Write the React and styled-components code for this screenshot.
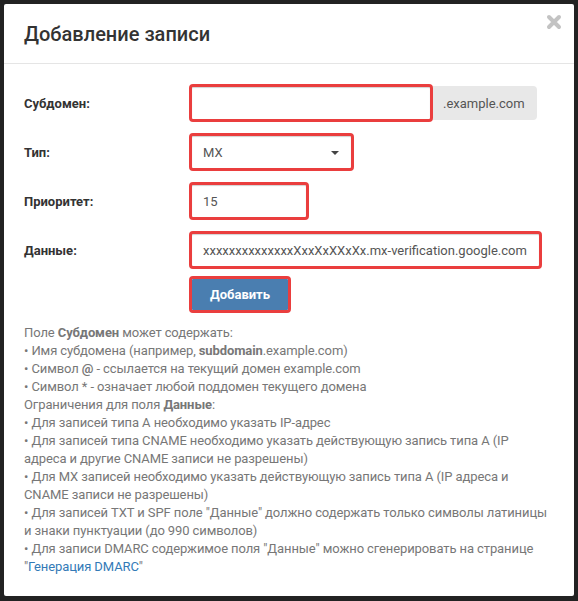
import React from 'react';
import styled, { createGlobalStyle } from 'styled-components';

const GlobalStyle = createGlobalStyle`
  html, body {
    margin: 0;
    padding: 0;
    background: #222222;
  }
  body {
    font-family: Roboto, "Liberation Sans", Arial, sans-serif;
  }
  * {
    box-sizing: border-box;
  }
`;

const Modal = styled.div`
  margin: 4px;
  width: 570px;
  height: 592px;
  background: #fff;
  border-radius: 2px;
  overflow: hidden;
`;

const Header = styled.div`
  position: relative;
  height: 60px;
  padding: 18px 20px 0;
  border-bottom: 1px solid #e5e5e5;
`;

const Title = styled.h4`
  margin: 0;
  font-size: 20px;
  font-weight: 500;
  color: #333;
  line-height: 24px;
`;

const CloseButton = styled.button`
  position: absolute;
  top: 10px;
  right: 12px;
  padding: 0;
  border: 0;
  background: none;
  cursor: pointer;
  display: flex;
`;

const Body = styled.div`
  padding: 20px 20px 0;
`;

const FormRow = styled.div`
  display: flex;
  align-items: center;
  margin-bottom: 11px;
`;

const Label = styled.label`
  width: 165px;
  flex: none;
  font-size: 13px;
  font-weight: 700;
  color: #333;
`;

const InputGroup = styled.div`
  display: flex;
  align-items: center;
`;

const Field = styled.div`
  position: relative;
  width: ${(p) => p.$width}px;
  height: 38px;
  border: 3px solid #ea3e3e;
  border-radius: 4px;
  box-shadow: inset 0 1px 1px rgba(0, 0, 0, 0.18);
  background: #fff;
  padding: 0 12px 0 11px;
  display: flex;
  align-items: center;
  overflow: hidden;
  font-size: 13px;
  color: #555;
  white-space: nowrap;
`;

const Addon = styled.div`
  height: 34px;
  padding: 0 12px 0 10px;
  display: flex;
  align-items: center;
  background: #e8e8e8;
  border-radius: 0 4px 4px 0;
  font-size: 13px;
  color: #555;
`;

const Caret = styled.span`
  position: absolute;
  right: 12px;
  top: 15px;
  width: 0;
  height: 0;
  border-left: 4px solid transparent;
  border-right: 4px solid transparent;
  border-top: 4px solid #444;
`;

const SubmitWrap = styled.div`
  margin-left: 165px;
  width: 102px;
  height: 37px;
  border: 3px solid #ea3e3e;
  border-radius: 4px;
  margin-top: -4px;
`;

const SubmitButton = styled.button`
  width: 100%;
  height: 100%;
  border: 0;
  border-radius: 1px;
  background: #4a7eb0;
  color: #fff;
  font-family: inherit;
  font-size: 13px;
  font-weight: 700;
  padding: 0;
`;

const Help = styled.div`
  margin-top: 11px;
  font-size: 13px;
  line-height: 18px;
  letter-spacing: -0.1px;
  white-space: nowrap;
  color: #777;
`;

const Line = styled.div``;

const Link = styled.a`
  color: #337ab7;
  text-decoration: none;
`;

const CloseIcon = () => (
  <svg width="16" height="16" viewBox="0 0 16 16">
    <path
      d="M3 3 L13 13 M13 3 L3 13"
      stroke="#c3c3c3"
      strokeWidth="4"
      strokeLinecap="round"
    />
  </svg>
);

const App = () => (
  <>
    <GlobalStyle />
    <Modal>
      <Header>
        <Title>Добавление записи</Title>
        <CloseButton aria-label="Закрыть">
          <CloseIcon />
        </CloseButton>
      </Header>
      <Body>
        <FormRow>
          <Label>Субдомен:</Label>
          <InputGroup>
            <Field $width={244} />
            <Addon>.example.com</Addon>
          </InputGroup>
        </FormRow>
        <FormRow>
          <Label>Тип:</Label>
          <Field $width={165}>
            MX
            <Caret />
          </Field>
        </FormRow>
        <FormRow>
          <Label>Приоритет:</Label>
          <Field $width={120}>15</Field>
        </FormRow>
        <FormRow>
          <Label>Данные:</Label>
          <Field $width={353}>
            xxxxxxxxxxxxxxXxxXxXXxXx.mx-verification.google.com
          </Field>
        </FormRow>
        <SubmitWrap>
          <SubmitButton>Добавить</SubmitButton>
        </SubmitWrap>
        <Help>
          <Line>
            Поле <b>Субдомен</b> может содержать:
          </Line>
          <Line>• Имя субдомена (например, <b>subdomain</b>.example.com)</Line>
          <Line>• Символ <b>@</b> - ссылается на текущий домен example.com</Line>
          <Line>• Символ * - означает любой поддомен текущего домена</Line>
          <Line>
            Ограничения для поля <b>Данные</b>:
          </Line>
          <Line>• Для записей типа A необходимо указать IP-адрес</Line>
          <Line>
            • Для записей типа CNAME необходимо указать действующую запись типа A (IP
            <br />
            адреса и другие CNAME записи не разрешены)
          </Line>
          <Line>
            • Для MX записей необходимо указать действующую запись типа A (IP адреса и
            <br />
            CNAME записи не разрешены)
          </Line>
          <Line>
            • Для записей TXT и SPF поле "Данные" должно содержать только символы латиницы
            <br />
            и знаки пунктуации (до 990 символов)
          </Line>
          <Line>
            • Для записи DMARC содержимое поля "Данные" можно сгенерировать на странице
            <br />
            "<Link href="#">Генерация DMARC</Link>"
          </Line>
        </Help>
      </Body>
    </Modal>
  </>
);

export default App;
